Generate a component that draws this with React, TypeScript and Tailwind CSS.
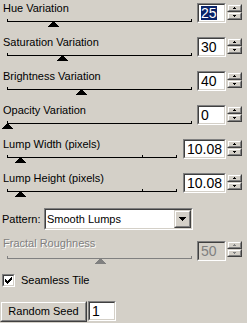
import React from "react";

type Kids = { className?: string; innerClassName?: string; children?: React.ReactNode };

function Sunken({ className = "", innerClassName = "", children }: Kids) {
  return (
    <div className={`border border-t-[#808080] border-l-[#808080] border-b-white border-r-white ${className}`}>
      <div
        className={`h-full w-full border border-t-[#404040] border-l-[#404040] border-b-[#d4d0c8] border-r-[#d4d0c8] ${innerClassName}`}
      >
        {children}
      </div>
    </div>
  );
}

function Raised({ className = "", innerClassName = "", children }: Kids) {
  return (
    <div className={`border border-t-[#d4d0c8] border-l-[#d4d0c8] border-b-[#404040] border-r-[#404040] bg-[#d4d0c8] ${className}`}>
      <div
        className={`flex h-full w-full items-center justify-center border border-t-white border-l-white border-b-[#808080] border-r-[#808080] ${innerClassName}`}
      >
        {children}
      </div>
    </div>
  );
}

function Spinner({ disabled = false }: { disabled?: boolean }) {
  const c = disabled ? "#808080" : "#000000";
  return (
    <div className="ml-[1px] mt-[4px] flex w-[15px] flex-col">
      <Raised className="h-[8px]">
        <svg width="3" height="2" shapeRendering="crispEdges" className="block">
          <rect x="1" y="0" width="1" height="1" fill={c} />
          <rect x="0" y="1" width="3" height="1" fill={c} />
        </svg>
      </Raised>
      <Raised className="h-[8px]">
        <svg width="3" height="2" shapeRendering="crispEdges" className="block">
          <rect x="0" y="0" width="3" height="1" fill={c} />
          <rect x="1" y="1" width="1" height="1" fill={c} />
        </svg>
      </Raised>
    </div>
  );
}

function Track({
  width,
  end,
  mid,
  thumb,
  disabled = false,
  className = "",
}: {
  width: number;
  end: number;
  mid?: number;
  thumb: number;
  disabled?: boolean;
  className?: string;
}) {
  const c = disabled ? "#808080" : "#000000";
  const rows = [3, 5, 7, 9, 11];
  return (
    <svg width={width} height={10} className={`block ${className}`} shapeRendering="crispEdges">
      <rect x={7} y={3} width={end - 7 + 1} height={1} fill={c} />
      <rect x={7} y={1} width={1} height={2} fill={c} />
      <rect x={end} y={1} width={1} height={2} fill={c} />
      {mid !== undefined && <rect x={mid} y={1} width={1} height={2} fill={c} />}
      {rows.map((w, i) => (
        <rect key={i} x={thumb - (w - 1) / 2} y={4 + i} width={w} height={1} fill={c} />
      ))}
    </svg>
  );
}

const editFont = "font-['Liberation_Sans_Narrow','Arial_Narrow','Liberation_Sans',sans-serif] text-[14px] leading-[14px]";

function SliderRow({
  label,
  value,
  thumb,
  wide = false,
  selected = false,
}: {
  label: string;
  value: string;
  thumb: number;
  wide?: boolean;
  selected?: boolean;
}) {
  return (
    <div className="flex h-[34px] shrink-0">
      <div className={`flex flex-col ${wide ? "w-[183px]" : "w-[197px]"}`}>
        <div className="mt-[2px] h-[13px] pl-[3px] leading-[13px] whitespace-nowrap">{label}</div>
        {wide ? (
          <Track width={183} end={176} mid={142} thumb={thumb} className="mt-[3px]" />
        ) : (
          <Track width={197} end={191} thumb={thumb} className="mt-[3px]" />
        )}
      </div>
      <Sunken
        className={`mt-[3px] h-[20px] ${wide ? "w-[43px]" : "w-[29px]"}`}
        innerClassName="flex items-center bg-white pl-[2px]"
      >
        {selected ? (
          <span className={`bg-[#0a246a] text-white ${editFont}`}>{value}</span>
        ) : (
          <span className={editFont}>{value}</span>
        )}
      </Sunken>
      <Spinner />
    </div>
  );
}

export default function App() {
  return (
    <div className="flex h-[323px] w-[247px] flex-col overflow-hidden bg-[#d4d0c8] font-['Liberation_Sans',Arial,sans-serif] text-[11px] text-black">
      <SliderRow label="Hue Variation" value="25" thumb={53} selected />
      <SliderRow label="Saturation Variation" value="30" thumb={62} />
      <SliderRow label="Brightness Variation" value="40" thumb={81} />
      <SliderRow label="Opacity Variation" value="0" thumb={7} />
      <SliderRow label="Lump Width (pixels)" value="10.08" thumb={20} wide />
      <SliderRow label="Lump Height (pixels)" value="10.08" thumb={20} wide />

      <div className="mt-[4px] flex h-[22px] shrink-0 items-center">
        <div className="w-[44px] pl-[2px] whitespace-nowrap">Pattern:</div>
        <Sunken className="h-[22px] w-[149px]" innerClassName="flex items-center bg-white">
          <span className="flex-1 pl-[1px] whitespace-nowrap">Smooth Lumps</span>
          <Raised className="h-full w-[17px]">
            <svg width="7" height="4" shapeRendering="crispEdges" className="block">
              <rect x="0" y="0" width="7" height="1" fill="#000" />
              <rect x="1" y="1" width="5" height="1" fill="#000" />
              <rect x="2" y="2" width="3" height="1" fill="#000" />
              <rect x="3" y="3" width="1" height="1" fill="#000" />
            </svg>
          </Raised>
        </Sunken>
      </div>

      <div className="mt-[7px] flex h-[34px] shrink-0">
        <div className="flex w-[197px] flex-col">
          <div className="h-[13px] pl-[3px] leading-[13px] whitespace-nowrap text-[#808080] [text-shadow:1px_1px_0_#ffffff]">
            Fractal Roughness
          </div>
          <Track width={197} end={191} thumb={100} disabled className="mt-[5px]" />
        </div>
        <Sunken className="mt-[4px] h-[20px] w-[29px]" innerClassName="flex items-center bg-[#d4d0c8] pl-[2px]">
          <span className={`text-[#808080] ${editFont}`}>50</span>
        </Sunken>
        <Spinner disabled />
      </div>

      <div className="mt-[3px] flex h-[13px] shrink-0 items-center pl-[2px]">
        <Sunken className="h-[13px] w-[13px]" innerClassName="bg-white">
          <svg width="9" height="9" shapeRendering="crispEdges" className="block">
            {[
              [7, 1, 1],
              [6, 2, 2],
              [1, 3, 1],
              [5, 3, 3],
              [1, 4, 2],
              [4, 4, 3],
              [1, 5, 5],
              [2, 6, 3],
              [3, 7, 1],
            ].map(([x, y, w], i) => (
              <rect key={i} x={x} y={y} width={w} height={1} fill="#000" />
            ))}
          </svg>
        </Sunken>
        <span className="ml-[6px] whitespace-nowrap">Seamless Tile</span>
      </div>

      <div className="mt-[14px] flex shrink-0 items-start">
        <Raised className="h-[21px] w-[87px]">
          <span className="whitespace-nowrap">Random Seed</span>
        </Raised>
        <Sunken className="ml-[1px] h-[20px] w-[28px]" innerClassName="flex items-center bg-white pl-[2px]">
          <span className={editFont}>1</span>
        </Sunken>
      </div>
    </div>
  );
}
